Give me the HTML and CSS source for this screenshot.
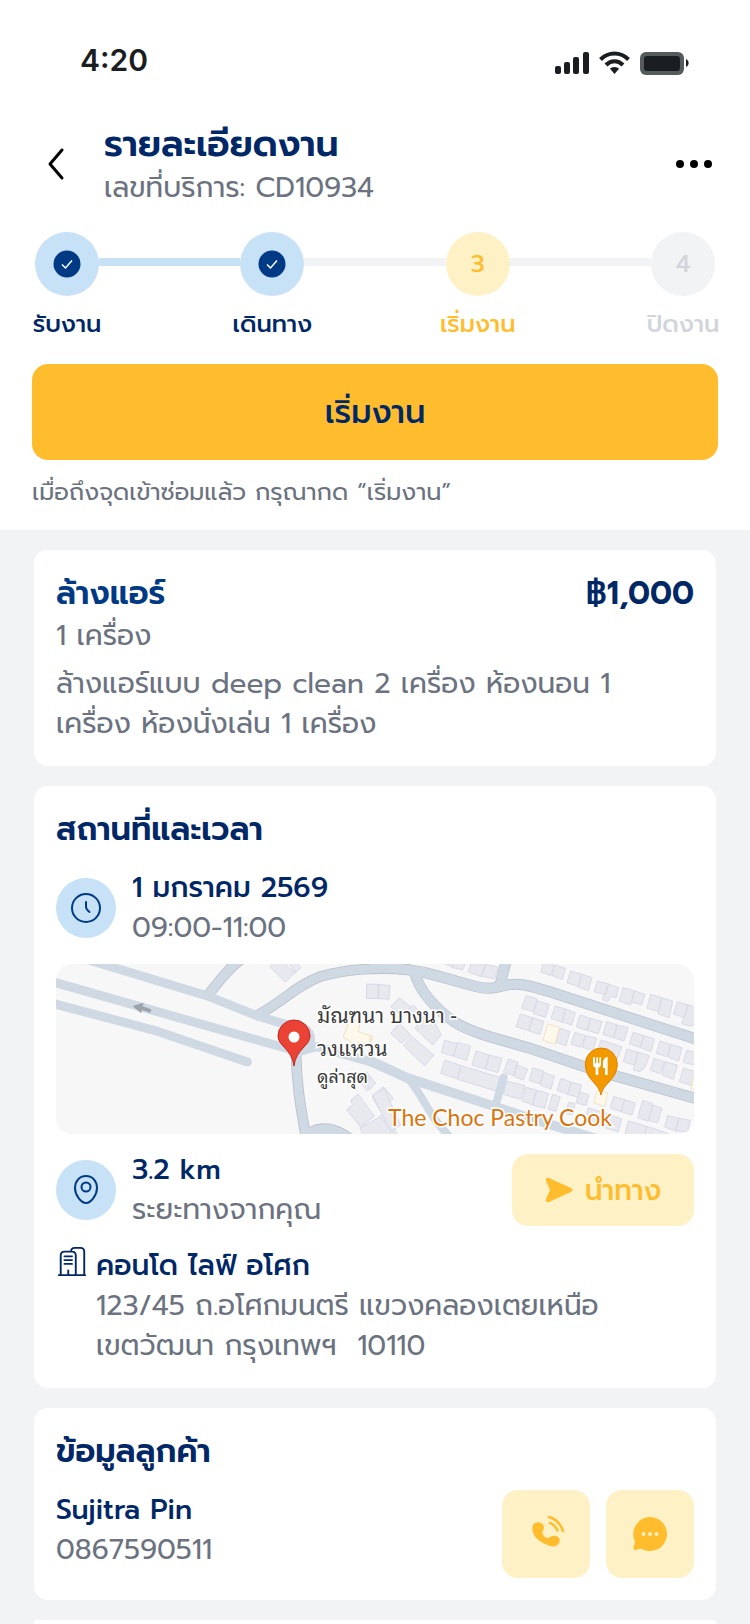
FILE: index.html
```html
<!DOCTYPE html>
<html lang="th">

<head>
    <meta charset="utf-8">
    <meta name="viewport" content="width=device-width, initial-scale=1.0">
    <title>รายละเอียดงาน</title>
    <link rel="stylesheet" href="styles.css">
</head>

<body>
    <header class="top">
        <div class="status-bar">
            <span class="clock">4:20</span>
            <svg class="status-icons" width="136" height="26" viewBox="0 0 136 26" aria-hidden="true">
                <g fill="#1a1e21">
                    <rect x="0" y="15" width="6" height="8" rx="2" />
                    <rect x="9" y="11" width="6" height="12" rx="2" />
                    <rect x="18" y="6" width="6" height="17" rx="2" />
                    <rect x="28" y="1" width="6" height="22" rx="2" />
                    <path d="M59.500 16c2 0 3.500 .8 4.500 1.800L59.500 23l-4.500-5.200C56 16.800 57.500 16 59.500 16z" />
                </g>
                <g fill="none" stroke="#1a1e21" stroke-width="4">
                    <path d="M45.500 8.500C53.500 .500 65.500 .500 73.500 8.500" />
                    <path d="M51 14C56 9 63 9 68 14" />
                </g>
                <rect x="85" y="1" width="44" height="23" rx="6" fill="#555a5c" />
                <rect x="89" y="5" width="36" height="15" rx="3" fill="#1a1e21" />
                <path d="M131 8c3.500 1.500 3.500 6.500 0 8z" fill="#1a1e21" />
            </svg>
        </div>

        <div class="title-bar">
            <button class="icon-btn" aria-label="ย้อนกลับ">
                <svg width="48" height="48" viewBox="0 0 48 48">
                    <path d="M30 10L18 24l12 14" fill="none" stroke="#000" stroke-width="3" stroke-linecap="round"
                        stroke-linejoin="round" />
                </svg>
            </button>
            <div class="title-text">
                <h1>รายละเอียดงาน</h1>
                <p>เลขที่บริการ: CD10934</p>
            </div>
            <button class="icon-btn" aria-label="เมนู">
                <svg width="48" height="48" viewBox="0 0 48 48">
                    <circle cx="10" cy="24" r="4" />
                    <circle cx="24" cy="24" r="4" />
                    <circle cx="38" cy="24" r="4" />
                </svg>
            </button>
        </div>

        <ol class="steps">
            <li class="step done filled">
                <div class="step-row">
                    <span class="dot"><svg width="28" height="28" viewBox="0 0 28 28">
                            <circle cx="14" cy="14" r="13.500" fill="#003a85" />
                            <path d="M9 14.500l3.500 3.500L19 10.500" fill="none" stroke="#fff" stroke-width="1.500" />
                        </svg></span>
                </div>
                <span class="step-label">รับงาน</span>
            </li>
            <li class="step done">
                <div class="step-row">
                    <span class="dot"><svg width="28" height="28" viewBox="0 0 28 28">
                            <circle cx="14" cy="14" r="13.500" fill="#003a85" />
                            <path d="M9 14.500l3.500 3.500L19 10.500" fill="none" stroke="#fff" stroke-width="1.500" />
                        </svg></span>
                </div>
                <span class="step-label">เดินทาง</span>
            </li>
            <li class="step current">
                <div class="step-row"><span class="dot">3</span></div>
                <span class="step-label">เริ่มงาน</span>
            </li>
            <li class="step">
                <div class="step-row"><span class="dot">4</span></div>
                <span class="step-label">ปิดงาน</span>
            </li>
        </ol>

        <button class="start-btn">เริ่มงาน</button>
        <p class="hint">เมื่อถึงจุดเข้าซ่อมแล้ว กรุณากด “เริ่มงาน”</p>
    </header>

    <main class="cards">
        <section class="card">
            <div class="card-head">
                <h2 class="service">ล้างแอร์</h2>
                <span class="price">฿1,000</span>
            </div>
            <p>1 เครื่อง</p>
            <p class="desc">ล้างแอร์แบบ deep clean 2 เครื่อง ห้องนอน 1<br>เครื่อง ห้องนั่งเล่น 1 เครื่อง</p>
        </section>

        <section class="card place">
            <h2>สถานที่และเวลา</h2>
            <div class="info-row">
                <span class="badge">
                    <svg width="32" height="32" viewBox="0 0 32 32" fill="none" stroke="#003a85" stroke-width="2"
                        stroke-linecap="round">
                        <circle cx="16" cy="16" r="14" />
                        <path d="M16 10v5c0 2 1 3 3.500 5" />
                    </svg>
                </span>
                <div class="info-text">
                    <strong>1 มกราคม 2569</strong>
                    <p>09:00-11:00</p>
                </div>
            </div>

            <svg class="map" viewBox="0 0 638 170" preserveAspectRatio="xMidYMid slice" role="img" aria-label="แผนที่">
                <rect width="638" height="170" fill="#f7f7f7" />
                <!-- west half -->
                <g transform="translate(-6 -9) scale(.3333)">
                    <g fill="#e8e9ee" stroke="#d9d9e8" stroke-width="3">
                        <path d="M660 35L672 20H715L735 52L706 82zM705 25L735 55L752 38L738 20zM950 88H988V130H950zM902 435L925 418L973 484L932 517L890 464L908 450zM953 516L1000 475L1045 540L1000 570zM966 425L1000 395L1030 430L992 470zM925 375L950 350L977 385L952 408z" />
                    </g>
                    <path d="M900 190L930 200L925 230L968 245L960 270L925 262L915 316L895 310L905 262L880 245z"
                        fill="#fdf8ea" stroke="#efe3c4" stroke-width="3" />
                    <g fill="none" stroke="#b9c0cc" stroke-width="32">
                        <path d="M470 125C500 90 540 30 580 10" />
                        <path d="M615 185C700 140 740 90 810 65C890 42 960 38 1080 43" />
                        <path d="M738 290C740 400 755 470 770 560" />
                    </g>
                    <path d="M775 520C810 495 870 505 915 545H775z" fill="#cfd9e3" stroke="#b9c0cc" stroke-width="3" />
                    <g fill="none" stroke="#cfd9e3" stroke-width="27">
                        <path d="M470 125C500 90 540 30 580 10" />
                        <path d="M615 185C700 140 740 90 810 65C890 42 960 38 1080 43" />
                        <path d="M738 290C740 400 755 470 770 560" />
                        <path d="M100 10L470 122L615 180L735 217" />
                        <path d="M0 78L480 215L745 290L800 275L980 325L1070 368" />
                        <path d="M0 143L320 228L592 321" stroke-linecap="round" />
                    </g>
                    <circle cx="745" cy="252" r="50" fill="#cfd9e3" />
                    <path d="M248 153L281 143L278 154L304 163L301 173L276 165L273 175z" fill="#9aa3ab" />
                </g>
                <!-- east half -->
                <g transform="translate(314 -9) scale(.3333)">
                    <g fill="#e8e9ee" stroke="#d9d9e8" stroke-width="3">
                        <path d="M-10 88H24V130H-10zM26 88L60 92L57 133L26 130zM215 22L245 35L252 18zM246 38L278 44L290 20L255 16zM305 22L346 32L334 65L294 50zM346 28L384 36L374 72L334 63z" />
                        <path d="M520 20L552 30L543 62L513 52zM555 30L587 40L577 73L547 63zM602 48L636 58L625 94L591 84zM636 58L666 68L655 107L624 96zM682 78L716 87L708 120L672 110zM716 87L746 98L739 128L722 124L714 140L697 134zM759 98L794 108L782 150L747 138zM794 108L825 118L815 150L784 141zM842 118L876 128L865 170L831 159zM876 128L908 138L898 188L864 176zM922 140L955 150L942 188L911 177zM955 150L980 158V205L962 214L935 206L945 180z" />
                        <path d="M468 122L502 132L490 170L455 160zM502 138L538 148L526 187L491 176zM451 177L488 188L476 227L438 215zM488 188L522 199L510 238L476 228zM556 153L588 163L577 202L543 190zM588 163L616 173L605 210L576 200zM570 220L600 230L588 272L558 262zM630 180L662 190L650 226L619 216zM662 190L697 200L685 236L652 226zM614 232L646 242L633 277L603 267zM646 242L680 250L668 286L638 277zM710 200L742 210L730 248L699 238zM742 210L775 218L762 258L731 248zM693 255L756 275L743 310L680 295z" />
                        <path d="M790 232L822 242L810 277L778 267zM822 242L853 252L843 290L811 278zM771 282L804 292L792 330L760 320zM804 292L838 302L825 337L810 350L790 345zM870 258L903 268L891 305L859 295zM903 268L936 278L926 318L894 306zM852 310L884 320L872 356L841 346zM884 320L922 330L910 373L877 360zM950 286L990 296V335L940 322zM940 340L980 350L968 392L928 380z" />
                        <path d="M224 256L262 266L250 304L214 292zM262 262L302 273L290 317L252 304zM318 288L358 300L346 342L306 330zM358 300L396 310L384 353L346 342zM225 315L273 332L262 372L212 355zM273 332L400 370L385 410L263 373zM415 312L445 322L430 362L400 352zM440 330L473 342L460 375L432 365zM410 378L465 392L452 433L400 418zM488 338L521 348L510 387L478 376zM521 352L554 364L543 402L511 390zM468 397L500 406L488 450L456 438zM500 406L536 416L524 460L488 450zM548 418L571 426L557 470L534 462zM573 370L604 382L593 418L561 405zM604 382L635 390L624 427L593 418zM630 410L657 420L648 452L618 443zM596 442L615 446L608 480L586 475z" />
                        <path d="M731 424L764 434L753 470L721 459zM764 434L796 444L786 480L753 470zM818 436L848 446L835 498L803 488zM848 450L876 460L863 504L835 496zM893 482L927 490L916 528L884 516zM927 490L961 496L953 530L916 528zM655 458L755 492L745 530L645 500zM775 498L830 514L820 550H762zM830 514L892 534L885 550H820z" />
                        <path d="M62 155L88 128L122 155L98 185zM110 170L130 150L155 175L135 195zM62 235L88 205L122 240L95 265zM135 220L160 185L190 195L214 240L188 270zM100 272L125 244L192 300L164 332zM8 420L42 400L92 510L62 530zM-10 385L0 365L17 385L0 402zM-30 520L30 485L80 545H-20z" />
                    </g>
                    <g fill="#fdf8ea" stroke="#efe3c4" stroke-width="3">
                        <path d="M533 207L569 217L555 268L519 256zM682 406L713 414L704 455L672 443zM970 370L985 360V410L963 402zM0 240L8 243L0 265z" />
                    </g>
                    <g fill="none" stroke="#b9c0cc" stroke-width="33">
                        <path d="M0 40C80 35 140 45 200 62L300 90C350 105 370 100 400 92C450 80 490 95 560 117L990 256" />
                        <path d="M390 90L411 10" />
                        <path d="M133 50C145 100 190 160 260 205C320 240 400 255 480 280L680 347L990 434" />
                    </g>
                    <g fill="none" stroke="#cfd9e3" stroke-width="29">
                        <path d="M0 40C80 35 140 45 200 62L300 90C350 105 370 100 400 92C450 80 490 95 560 117L990 256" />
                        <path d="M390 90L411 10" />
                        <path d="M133 50C145 100 190 160 260 205C320 240 400 255 480 280L680 347L990 434" />
                        <path d="M0 318L110 368L370 453L460 483L690 555" />
                        <path d="M112 368C150 410 170 460 200 500L250 560" stroke-width="24" />
                        <path d="M401 368L375 455" stroke-width="24" stroke-linecap="round" />
                    </g>
                    <path d="M693 420C688 385 646 375 646 327a48 48 0 0 1 96 0C742 375 698 385 693 420z" fill="#f29900"
                        stroke="#e37f00" stroke-width="3" />
                    <path d="M669 307v20c0 8 5 10 8 11v22h8v-22c5-1 8-4 8-11v-20h-5v18h-4v-18h-5v18h-4v-18zM713 305c-9 1-14 10-14 20v14h6v21h8z"
                        fill="#fff" />
                </g>
                <path d="M238 102C236 85 222 82 222 72a16 16 0 0 1 32 0C254 82 240 85 238 102z" fill="#ea4335"
                    stroke="#c5221f" />
                <circle cx="238" cy="73" r="5.500" fill="#fff" />
                <g class="map-text">
                    <text x="261" y="59">มัณฑนา บางนา -</text>
                    <text x="261" y="92">วงแหวน</text>
                    <text class="small" x="261" y="119">ดูล่าสุด</text>
                    <text class="poi" x="332" y="162">The Choc Pastry Cook</text>
                </g>
            </svg>

            <div class="info-row">
                <span class="badge">
                    <svg width="32" height="32" viewBox="0 0 32 32" fill="none" stroke="#003a85" stroke-width="2">
                        <path d="M16 2C9 2 5 7.500 5 14c0 7 6 15 11 15s11-8 11-15C27 7.500 23 2 16 2z" />
                        <circle cx="16" cy="13" r="4.500" />
                    </svg>
                </span>
                <div class="info-text">
                    <strong>3.2 km</strong>
                    <p>ระยะทางจากคุณ</p>
                </div>
                <button class="soft-btn nav-btn">
                    <svg width="28" height="28" viewBox="0 0 28 28" fill="#ffbd2e">
                        <path d="M1 5C0 3 2 1 4 2l22 10c2 1 2 3 0 4L4 26c-2 1-4-1-3-3l4-9z" />
                    </svg>
                    นำทาง
                </button>
            </div>

            <div class="address">
                <svg width="32" height="32" viewBox="-1 -1 34 34" fill="none" stroke="#002766" stroke-width="2"
                    stroke-linecap="round">
                    <path d="M2 30h28M4 30V9c0-3 1-4 4-4h8c3 0 4 1 4 4v21M15 5c0-3 1-4 4-4h6c3 0 4 1 4 4v25" />
                    <path d="M8 10h8M8 14h8M8 18h8M12 30v-5" />
                </svg>
                <address>
                    <strong>คอนโด ไลฟ์ อโศก</strong>
                    <p>123/45 ถ.อโศกมนตรี แขวงคลองเตยเหนือ<br>เขตวัฒนา กรุงเทพฯ&nbsp; 10110</p>
                </address>
            </div>
        </section>

        <section class="card place">
            <h2>ข้อมูลลูกค้า</h2>
            <div class="customer">
                <div class="info-text">
                    <strong>Sujitra Pin</strong>
                    <p>0867590511</p>
                </div>
                <button class="soft-btn square-btn" aria-label="โทร">
                    <svg width="40" height="40" viewBox="0 0 40 40">
                        <path d="M7 11C9 7 17 7 18 13c0 4-3 4-1 7.500s4 4.500 7 2.500c5-3 11 0 9.500 5-2 5-7 5.500-12 3C12 28 4 20 7 11z"
                            fill="#ffbd2e" />
                        <path d="M23 3c7 2 12 8 14 14M24 9c4 1.500 6 4 7.500 7.500" fill="none" stroke="#ffbd2e"
                            stroke-width="2.500" stroke-linecap="round" />
                    </svg>
                </button>
                <button class="soft-btn square-btn" aria-label="แชท">
                    <svg width="40" height="40" viewBox="0 0 40 40">
                        <path d="M20 3a17 17 0 1 1-8 32c-3-1-5 1-7 1-2 0-2-2-1-4 1-3 1-4 .5-5.500A17 17 0 0 1 20 3z"
                            fill="#ffbd2e" />
                        <g fill="#fef1c6">
                            <circle cx="13.500" cy="20" r="1.900" />
                            <circle cx="20" cy="20" r="1.900" />
                            <circle cx="26.500" cy="20" r="1.900" />
                        </g>
                    </svg>
                </button>
            </div>
        </section>

        <section class="card next-card"></section>
    </main>
</body>

</html>
```
FILE: styles.css
```css
* {
    box-sizing: border-box;
    margin: 0;
    padding: 0;
}

body {
    min-height: 100vh;
    display: flex;
    flex-direction: column;
    background: #f2f3f5;
    color: #6b7280;
    font-family: Prompt, "Noto Sans Thai", Inter, "Noto Sans", sans-serif;
    font-size: 28px;
    line-height: 40px;
}

button {
    border: none;
    background: none;
    font-family: inherit;
    cursor: pointer;
}

svg {
    display: block;
    flex: none;
}

h1,
h2,
strong {
    color: #002766;
}

strong {
    display: block;
    font-weight: 500;
}

.top {
    background: #fff;
    padding: 0 32px 22px;
}

.status-bar {
    display: flex;
    justify-content: space-between;
    align-items: center;
    height: 120px;
    padding: 0 27px 0 48px;
}

.clock {
    color: #1a1e21;
    font-family: Inter, sans-serif;
    font-size: 30px;
    font-weight: 600;
}

.status-icons {
    margin-top: 8px;
}

.title-bar {
    display: flex;
    align-items: center;
    gap: 24px;
    margin-bottom: 24px;
}

.title-text {
    flex: 1;
}

h1 {
    font-size: 36px;
    font-weight: 600;
    line-height: 48px;
}

.steps {
    display: flex;
    list-style: none;
    margin-bottom: 24px;
}

.step {
    flex: 1;
    color: #d1d5db;
    font-size: 24px;
    line-height: 32px;
}

.step:last-child {
    flex: none;
}

.step-row {
    display: flex;
    align-items: center;
    padding-left: 3px;
    margin-bottom: 12px;
}

.step-row::after {
    content: "";
    flex: 1;
    height: 8px;
    margin: 0 -3px 4px 0;
    background: #f2f3f5;
}

.step:last-child .step-row::after {
    display: none;
}

.filled .step-row::after {
    background: #c7e1f7;
}

.dot {
    display: flex;
    align-items: center;
    justify-content: center;
    width: 64px;
    height: 64px;
    border-radius: 50%;
    background: #f2f3f5;
    font-weight: 500;
}

.step-label {
    display: flex;
    justify-content: center;
    width: 70px;
    font-weight: 500;
    white-space: nowrap;
}

.done {
    color: #002766;
}

.done .dot {
    background: #c7e1f7;
}

.current {
    color: #ffbd2e;
}

.current .dot {
    background: #fef1c6;
}

.start-btn {
    width: 100%;
    height: 96px;
    border-radius: 16px;
    background: #ffbd2e;
    color: #002766;
    font-size: 32px;
    font-weight: 500;
    margin-bottom: 16px;
}

.hint {
    font-size: 24px;
    line-height: 32px;
}

.cards {
    flex: 1;
    display: flex;
    flex-direction: column;
    gap: 20px;
    padding: 20px 34px 0;
}

.card {
    padding: 22px;
    border-radius: 14px;
    background: #fff;
}

.card-head {
    display: flex;
    justify-content: space-between;
}

h2,
.price {
    font-size: 32px;
    font-weight: 600;
    line-height: 44px;
}

.service {
    color: #003a85;
}

.price {
    color: #002766;
}

.desc {
    margin-top: 8px;
}

.place {
    display: flex;
    flex-direction: column;
    gap: 16px;
}

.info-row,
.customer {
    display: flex;
    align-items: center;
    gap: 16px;
}

.info-text {
    flex: 1;
}

.badge {
    display: flex;
    align-items: center;
    justify-content: center;
    width: 60px;
    height: 60px;
    border-radius: 50%;
    background: #c7e1f7;
}

.map {
    width: 100%;
    height: 170px;
    border-radius: 16px;
}

.map-text {
    fill: #3c3c3c;
    stroke: #fff;
    stroke-width: 3px;
    paint-order: stroke;
    font-family: "Noto Sans Thai Looped", Inter, sans-serif;
    font-size: 21px;
}

.map-text .small {
    font-size: 18px;
}

.map-text .poi {
    fill: #d9730d;
    font-family: Lato, sans-serif;
    font-size: 23px;
}

.soft-btn {
    display: flex;
    align-items: center;
    justify-content: center;
    gap: 12px;
    border-radius: 16px;
    background: #fef1c6;
    color: #ffbd2e;
    font-size: 28px;
    font-weight: 500;
}

.nav-btn {
    width: 182px;
    height: 72px;
}

.square-btn {
    width: 88px;
    height: 88px;
}

.address {
    display: flex;
    gap: 8px;
}

.customer {
    align-items: flex-start;
}

address {
    font-style: normal;
}

.next-card {
    flex: 1;
    padding: 0;
    border-radius: 14px 14px 0 0;
}
```
